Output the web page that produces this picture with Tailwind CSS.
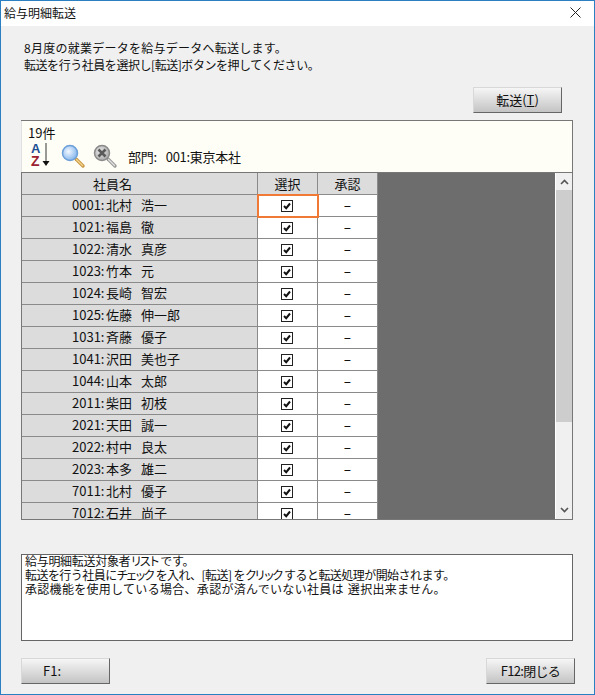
<!DOCTYPE html>
<html lang="ja">
<head>
  <meta charset="UTF-8" />
  <title>給与明細転送</title>
  <script src="https://cdn.jsdelivr.net/npm/@tailwindcss/browser@4"></script>
</head>
<body class="bg-[#f0f0f0]">
  <div class="w-[595px] h-[695px] overflow-hidden flex flex-col border border-[#2b80c4] bg-[#f0f0f0] text-[12px] leading-[14px] text-[#111] font-['Noto_Sans_CJK_JP','Noto_Sans',sans-serif]">

    <!-- Title bar -->
    <div class="h-[25px] shrink-0 bg-white flex items-center justify-between pl-[3px] pr-[13px] pb-[2px]">
      <span>給与明細転送</span>
      <svg width="11" height="11" viewBox="0 0 11 11"><path d="M0.5 0.5L10.5 10.5M10.5 0.5L0.5 10.5" stroke="#222" stroke-width="1" fill="none"/></svg>
    </div>

    <!-- Message -->
    <div class="h-[34px] mt-[13px] pl-[23px] shrink-0 leading-[17px]">
      <p class="tracking-[0.25px]">8月度の就業データを給与データへ転送します。</p>
      <p class="tracking-[-0.45px]">転送を行う社員を選択し[転送]ボタンを押してください。</p>
    </div>

    <!-- Transfer button -->
    <div class="h-[25px] mt-[14px] flex justify-end pr-[32px] shrink-0">
      <button class="w-[89px] h-[26px] text-[13px] bg-gradient-to-b from-[#f6f6f6] to-[#c4c4c4] border border-[#d8d8d8] border-r-[#666] border-b-[#666]">転送(<span class="underline">T</span>)</button>
    </div>

    <!-- Grid panel -->
    <div class="ml-[20px] w-[552px] h-[399px] mt-[8px] shrink-0 flex flex-col border-t border-r border-[#777]">
      <div class="h-[51px] shrink-0 bg-[#fffef6] pl-[6px] border-l border-[#e0e0e0] text-[13px]">
        <div class="pt-[5px]">19件</div>
        <div class="flex items-center h-[28px] mt-[1px]">
          <!-- sort icon -->
          <div class="relative w-[22px] h-[26px] mt-[2px]">
            <span class="absolute left-[3px] top-[-1px] text-[13px] leading-[14px] font-bold text-[#1d4f94] font-['Liberation_Sans',sans-serif]">A</span>
            <span class="absolute left-[3px] top-[11px] text-[14px] leading-[14px] font-bold text-[#9c2130] font-['Liberation_Sans',sans-serif]">Z</span>
            <svg class="absolute left-[14px] top-[0px]" width="8" height="26" viewBox="0 0 8 26"><path d="M4 0V19" stroke="#555" stroke-width="1.2"/><path d="M0.5 18H7.5L4 23Z" fill="#111"/></svg>
          </div>
          <!-- search icon -->
          <svg class="ml-[11px] mt-[3px]" width="26" height="26" viewBox="0 0 26 26">
            <defs>
              <radialGradient id="lens" cx="40%" cy="40%" r="65%"><stop offset="0" stop-color="#f2f8ff"/><stop offset="1" stop-color="#7fb2ec"/></radialGradient>
              <radialGradient id="lensg" cx="40%" cy="40%" r="65%"><stop offset="0" stop-color="#e8e8e8"/><stop offset="1" stop-color="#a8a8a8"/></radialGradient>
            </defs>
            <path d="M15 15L22 22" stroke="#c99a4a" stroke-width="3.4" stroke-linecap="round"/>
            <path d="M15.5 15.5L21.5 21.5" stroke="#f6d48a" stroke-width="1.2" stroke-linecap="round"/>
            <circle cx="9" cy="9" r="7.5" fill="url(#lens)" stroke="#6d9fd8" stroke-width="1.5"/>
          </svg>
          <!-- clear search icon -->
          <svg class="ml-[6px] mt-[3px]" width="26" height="26" viewBox="0 0 26 26">
            <path d="M15 15L22 22" stroke="#9a9a9a" stroke-width="3.4" stroke-linecap="round"/>
            <path d="M15.5 15.5L21.5 21.5" stroke="#e2e2e2" stroke-width="1.2" stroke-linecap="round"/>
            <circle cx="9" cy="9" r="7.5" fill="url(#lensg)" stroke="#8a8a8a" stroke-width="1.5"/>
            <path d="M5.5 5.5L12.5 12.5M12.5 5.5L5.5 12.5" stroke="#5a5a5a" stroke-width="2.6"/>
          </svg>
          <span class="ml-[9px] mt-[3px] tracking-[-0.3px]">部門:<span class="ml-[9px]">001:東京本社</span></span>
        </div>
      </div>

      <div class="flex-1 min-h-0 flex overflow-hidden border-t border-[#777]">
        <div class="w-[357px] shrink-0 overflow-hidden border-l border-[#777]">
          <div class="flex h-[22px] bg-[#dcdcdc] text-[13px] leading-[21px] border-b border-[#8a8a8a]">
            <div class="w-[236px] pl-[71px] border-r border-[#8a8a8a]">社員名</div>
            <div class="w-[60px] text-center border-r border-[#8a8a8a]">選択</div>
            <div class="w-[60px] text-center border-r border-[#8a8a8a]">承認</div>
          </div>
          <div id="rows"></div>
        </div>
        <div class="flex-1 bg-[#6d6d6d]"></div>
        <!-- scrollbar -->
        <div class="w-[17px] shrink-0 flex flex-col bg-[#f0f0f0] border-l border-white">
          <div class="h-[17px] flex items-center justify-center"><svg width="9" height="6" viewBox="0 0 9 6"><path d="M1 5L4.5 1.5L8 5" stroke="#555" stroke-width="1.6" fill="none"/></svg></div>
          <div class="h-[232px] bg-[#cdcdcd]"></div>
          <div class="flex-1"></div>
          <div class="h-[18px] flex items-center justify-center"><svg width="9" height="6" viewBox="0 0 9 6"><path d="M1 1L4.5 4.5L8 1" stroke="#555" stroke-width="1.6" fill="none"/></svg></div>
        </div>
      </div>
    </div>
    <div class="ml-[20px] w-[552px] h-px bg-[#777] shrink-0"></div>

    <!-- Help text -->
    <div class="ml-[20px] mt-[34px] w-[552px] h-[87px] shrink-0 bg-white border border-[#666] pl-[3px] text-[12px] leading-[14px]">
      <p class="tracking-[-0.3px] -mt-px">給与明細転送対象者<span class="tracking-[-3px]">リスト</span><span class="ml-[3px]">です。</span></p>
      <p class="tracking-[-0.55px]">転送を行う社員に<span class="tracking-[-3px]">チェック</span><span class="ml-[3px]">を入れ、[転送] を</span><span class="tracking-[-3px]">クリック</span><span class="ml-[3px]">すると転送処理が開始されます。</span></p>
      <p class="tracking-[0.3px]">承認機能を使用している場合、承認が済んでいない社員は<span class="ml-[4px]">選択出来ません。</span></p>
    </div>

    <!-- Footer buttons -->
    <div class="ml-[20px] mt-[17px] w-[554px] flex justify-between shrink-0">
      <button class="w-[89px] h-[26px] text-[13px] text-left pl-[21px] bg-gradient-to-b from-[#f6f6f6] to-[#c4c4c4] border border-[#d8d8d8] border-r-[#666] border-b-[#666]">F1:</button>
      <button class="w-[89px] h-[26px] text-[13px] tracking-[-0.7px] bg-gradient-to-b from-[#f6f6f6] to-[#c4c4c4] border border-[#d8d8d8] border-r-[#666] border-b-[#666]">F12:閉じる</button>
    </div>
  </div>

  <script>
    const employees = [
      ['0001', '北村 浩一'], ['1021', '福島 徹'], ['1022', '清水 真彦'], ['1023', '竹本 元'], ['1024', '長崎 智宏'],
      ['1025', '佐藤 伸一郎'], ['1031', '斉藤 優子'], ['1041', '沢田 美也子'], ['1044', '山本 太郎'], ['2011', '柴田 初枝'],
      ['2021', '天田 誠一'], ['2022', '村中 良太'], ['2023', '本多 雄二'], ['7011', '北村 優子'], ['7012', '石井 尚子']
    ];
    const check = `<svg width="12" height="12" viewBox="0 0 12 12"><rect x="0.5" y="0.5" width="11" height="11" fill="#fff" stroke="#222"/><path d="M3 6L5.2 8.2L9 3.5" stroke="#111" stroke-width="2" fill="none"/></svg>`;

    document.getElementById('rows').innerHTML = employees.map(([code, name], i) => `
      <div class="flex h-[22px]">
        <div class="w-[236px] bg-[#dcdcdc] border-r border-b border-[#8a8a8a] pl-[50px] text-[13px] leading-[20px] [word-spacing:6px]"><span class="inline-block w-[34px]">${code}:</span>${name}</div>
        <div class="w-[60px] bg-white border-r border-b border-[#8a8a8a] pr-[2px] flex items-center justify-center ${i === 0 ? 'relative z-10 outline-2 -outline-offset-1 outline-[#f07a35]' : ''}">${check}</div>
        <div class="w-[60px] bg-white border-r border-b border-[#8a8a8a] flex items-center justify-center font-medium leading-[20px]">−</div>
      </div>`).join('');
  </script>
</body>
</html>
